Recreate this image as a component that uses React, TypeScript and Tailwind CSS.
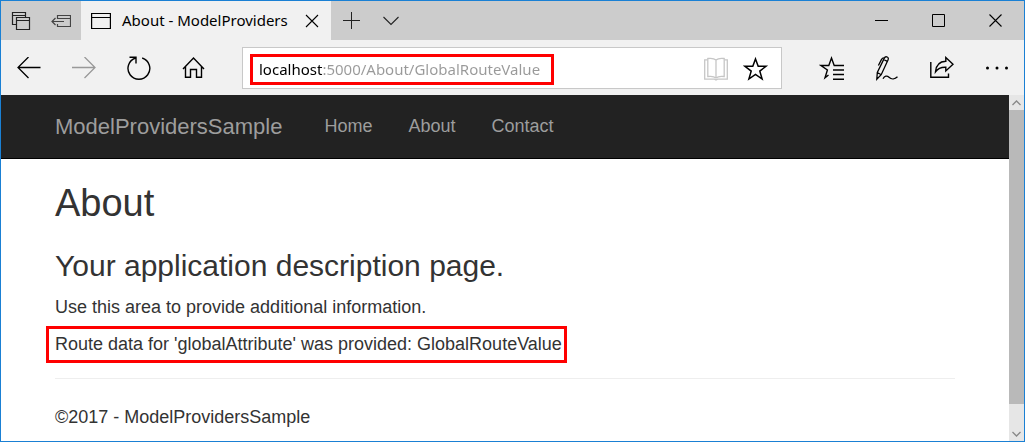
import type { ReactNode } from "react";

type IconProps = { w: number; h: number; sw?: number; children: ReactNode };

function Icon({ w, h, sw = 1, children }: IconProps) {
  return (
    <svg
      width={w}
      height={h}
      viewBox={`0 0 ${w} ${h}`}
      fill="none"
      stroke="currentColor"
      strokeWidth={sw}
      className="shrink-0"
      aria-hidden="true"
    >
      {children}
    </svg>
  );
}

function ToolButton({ label, className = "", children }: { label: string; className?: string; children: ReactNode }) {
  return (
    <button type="button" aria-label={label} className={`flex h-full w-[55px] shrink-0 items-center justify-center ${className}`}>
      {children}
    </button>
  );
}

function WindowButton({ label, children }: { label: string; children: ReactNode }) {
  return (
    <button type="button" aria-label={label} className="flex h-full w-[57px] items-center justify-center text-black">
      {children}
    </button>
  );
}

function TabStrip() {
  return (
    <div className="flex h-[39px] shrink-0 bg-[#cccccc] text-[#222222]">
      <div className="flex w-20 shrink-0">
        <button type="button" aria-label="Tabs you've set aside" className="flex w-10 items-center justify-center">
          <Icon w={20} h={20} sw={1.2}>
            <path d="M5.5 13.5H1.5V1.5H14.5V6M1.5 4.5H14.5" />
            <path d="M5.5 6.5H18.5V18.5H5.5ZM5.5 9.5H18.5" />
          </Icon>
        </button>
        <button type="button" aria-label="Set these tabs aside" className="flex w-10 items-center justify-center text-[#444444]">
          <Icon w={20} h={14} sw={1.2}>
            <path d="M6.5 5V1.5H19.5V12.5H6.5V10M6.5 4.5H19.5M1 7.5H13M4.5 4L1 7.5L4.5 11" />
          </Icon>
        </button>
      </div>
      <div className="flex w-[250px] shrink-0 items-center bg-[#f1f1f1] pl-[10px] text-black">
        <Icon w={20} h={18} sw={1.2}>
          <path d="M0.6 1.5H19.4V16.5H0.6ZM0.6 5.5H19.4" />
        </Icon>
        <span className="ml-[11px] min-w-0 flex-1 whitespace-nowrap text-[15px]">About - ModelProviders</span>
        <button type="button" aria-label="Close tab" className="flex h-full w-[38px] items-center justify-center">
          <Icon w={14} h={14} sw={1.1}>
            <path d="M1 1L13 13M13 1L1 13" />
          </Icon>
        </button>
      </div>
      <button type="button" aria-label="New tab" className="flex w-10 items-center justify-center">
        <Icon w={17} h={17}>
          <path d="M0 8.5H17M8.5 0V17" />
        </Icon>
      </button>
      <button type="button" aria-label="Show tab previews" className="flex w-10 items-center justify-center">
        <Icon w={16} h={10} sw={1.1}>
          <path d="M0.5 1L8 8.5L15.5 1" />
        </Icon>
      </button>
      <div className="ml-auto flex">
        <WindowButton label="Minimize">
          <Icon w={13} h={13}>
            <path d="M0 6.5H13" />
          </Icon>
        </WindowButton>
        <WindowButton label="Maximize">
          <Icon w={13} h={13}>
            <path d="M0.5 0.5H12.5V12.5H0.5Z" />
          </Icon>
        </WindowButton>
        <WindowButton label="Close">
          <Icon w={13} h={13} sw={1.1}>
            <path d="M0.5 0.5L12.5 12.5M12.5 0.5L0.5 12.5" />
          </Icon>
        </WindowButton>
      </div>
    </div>
  );
}

function Toolbar() {
  return (
    <div className="flex h-[55px] shrink-0 items-center bg-[#f1f1f1] text-black">
      <ToolButton label="Back">
        <Icon w={24} h={22} sw={1.3}>
          <path d="M0.8 10.5H23.5M11.5 0L1 10.5L11.5 21" />
        </Icon>
      </ToolButton>
      <ToolButton label="Forward" className="text-[#999999]">
        <Icon w={24} h={22} sw={1.3}>
          <path d="M0 10.5H23.2M12.5 0L23 10.5L12.5 21" />
        </Icon>
      </ToolButton>
      <ToolButton label="Refresh">
        <Icon w={24} h={24} sw={1.4}>
          <path d="M15.2 2A10.9 10.9 0 1 1 8.6 2M2.5 1.2H9V7.5" />
        </Icon>
      </ToolButton>
      <ToolButton label="Home">
        <Icon w={24} h={24} sw={1.4}>
          <path d="M1 13L11.5 2L22 13M3.5 10.5V21.3H8.5V13.5H14.5V21.3H19.5V10.5" />
        </Icon>
      </ToolButton>

      <div className="mr-[22px] ml-[21px] flex h-[42px] min-w-0 flex-1 items-center border border-[#c8c8c8] bg-white pt-[3px] pr-[5px] pl-[7px]">
        <input
          type="text"
          aria-label="Address"
          defaultValue="localhost:5000/About/GlobalRouteValue"
          className="h-[31px] w-[304px] min-w-0 border-3 border-[#ff0000] bg-[linear-gradient(to_right,#000000_70px,#999999_70px)] bg-clip-text px-[6px] text-[15px] text-transparent outline-none"
        />
        <button type="button" aria-label="Reading view" className="ml-auto flex h-full w-10 items-center justify-center text-[#c6c6c6]">
          <Icon w={24} h={24} sw={1.3}>
            <path d="M3.5 2.8H0.7V22.2H10.5L12 23L13.5 22.2H23.3V2.8H20.5" />
            <path d="M12 3C10 1.2 6 1.2 3.8 1.5V19.5C6 19.2 10 19.2 12 21C14 19.2 18 19.2 20.2 19.5V1.5C18 1.2 14 1.2 12 3ZM12 3V21" />
          </Icon>
        </button>
        <button type="button" aria-label="Add to favorites" className="flex h-full w-10 items-center justify-center">
          <Icon w={26} h={26} sw={1.5}>
            <path d="M12.5 3L15.2 10.3H23L16.8 15.1L19.1 23L12.5 18.4L5.9 23L8.2 15.1L2 10.3H9.8Z" />
          </Icon>
        </button>
      </div>

      <ToolButton label="Hub">
        <Icon w={26} h={26} sw={1.4}>
          <path d="M9.5 20L6 22.8L8.4 15L2 10.5H9.8L12.5 3L15.2 10.5H25M14 15H25M14 19.5H25M14 24.3H25" />
        </Icon>
      </ToolButton>
      <ToolButton label="Make a web note">
        <Icon w={24} h={26} sw={1.3}>
          <path d="M1.8 24.2L2.3 17.5L9.2 3.4C9.8 2 11 1.5 12.2 2C13.4 2.6 13.6 3.8 13 5L6.2 19.7L1.8 24.2ZM2.3 17.5L6.2 19.7M8.6 4.5L11.9 6.2M9.2 3.2C8 2.5 7 3.4 6.4 4.6L3.4 10.5" />
          <path d="M8 23.8C9.5 20.8 12 20.4 14 22.3C16.5 24.6 20 24.2 22.5 21.8" />
        </Icon>
      </ToolButton>
      <ToolButton label="Share">
        <Icon w={24} h={24} sw={1.4}>
          <path d="M0.8 6V21.3H18.5V17.5" />
          <path d="M5.5 15.8C6 8.8 10 5.4 15.8 5.2V1.5L23 8.2L15.8 15V11.2C11.5 11 8 12.2 5.5 15.8Z" />
        </Icon>
      </ToolButton>
      <ToolButton label="More">
        <Icon w={24} h={4}>
          <g fill="currentColor" stroke="none">
            <circle cx="2.5" cy="2" r="1.5" />
            <circle cx="12" cy="2" r="1.5" />
            <circle cx="21.5" cy="2" r="1.5" />
          </g>
        </Icon>
      </ToolButton>
    </div>
  );
}

function ScrollBar() {
  return (
    <div className="flex w-[15px] shrink-0 flex-col bg-[#e6e6e6] text-[#888888]" aria-hidden="true">
      <div className="flex h-[15px] items-center justify-center">
        <Icon w={9} h={6} sw={1.3}>
          <path d="M0.5 5L4.5 1L8.5 5" />
        </Icon>
      </div>
      <div className="flex-1">
        <div className="h-[93%] bg-[#b9b9b9]" />
      </div>
      <div className="flex h-[15px] items-center justify-center">
        <Icon w={9} h={6} sw={1.3}>
          <path d="M0.5 1L4.5 5L8.5 1" />
        </Icon>
      </div>
    </div>
  );
}

function Page() {
  return (
    <div className="min-w-0 flex-1 overflow-hidden bg-white font-['Liberation_Sans',Arial,sans-serif] text-lg leading-[25px] text-[#333333]">
      <header className="border-b border-black bg-[#222222] text-[#9d9d9d]">
        <nav className="mx-auto flex h-[63px] max-w-[900px] items-center">
          <a href="#" className="mr-[42px] text-[22px]">ModelProvidersSample</a>
          <div className="flex gap-9">
            <a href="#">Home</a>
            <a href="#">About</a>
            <a href="#">Contact</a>
          </div>
        </nav>
      </header>
      <div className="mx-auto max-w-[900px]">
        <h2 className="pt-[24px] text-[38px] leading-[41px]">About</h2>
        <h3 className="mt-[25px] text-[30px] leading-[34px]">Your application description page.</h3>
        <p className="mt-[12px]">Use this area to provide additional information.</p>
        <p className="mt-[6px] -ml-[9px] w-fit border-3 border-[#ff0000] pt-[3px] pr-[2px] pb-[3px] pl-[6px]">
          Route data for 'globalAttribute' was provided: GlobalRouteValue
        </p>
        <hr className="mt-[15px] border-[#eeeeee]" />
        <footer className="pt-[26px]">©2017 - ModelProvidersSample</footer>
      </div>
    </div>
  );
}

export default function App() {
  return (
    <div className="flex h-screen flex-col border border-[#1a80d4] font-['Noto_Sans','Open_Sans',sans-serif]">
      <TabStrip />
      <Toolbar />
      <main className="flex min-h-0 flex-1">
        <Page />
        <ScrollBar />
      </main>
    </div>
  );
}
